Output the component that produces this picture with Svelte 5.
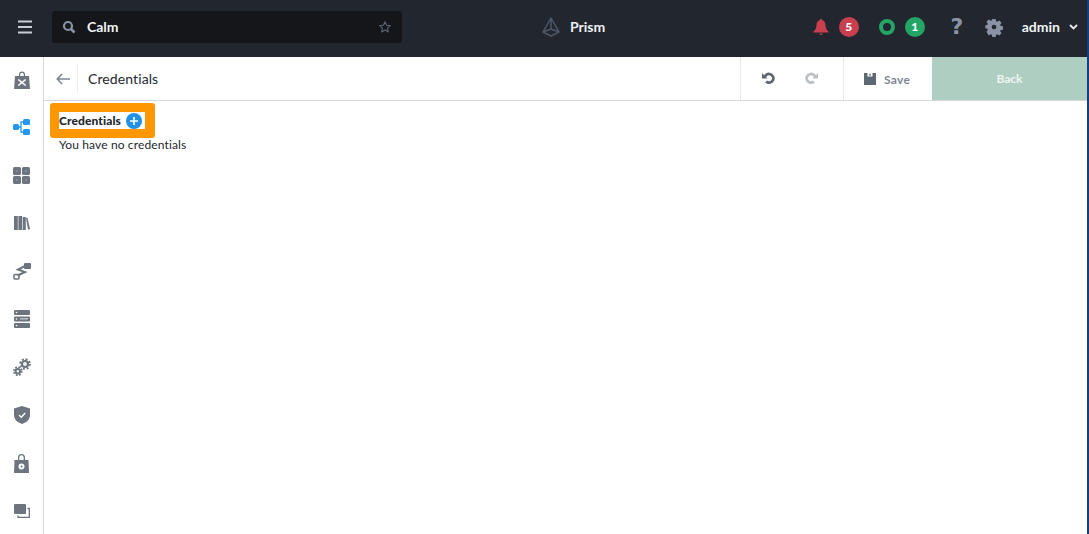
<script>
  const counts = { alerts: 5, tasks: 1 };
</script>

<div class="page">
  <header class="topbar">
    <button class="burger" aria-label="Menu">
      <svg width="16" height="14" viewBox="0 0 16 14"><path d="M1 1.500h14M1 7h14M1 12.500h14" stroke="#c9ced6" stroke-width="1.800" fill="none"/></svg>
    </button>
    <div class="search">
      <svg width="14" height="14" viewBox="0 0 14 14" class="search-icon"><circle cx="6" cy="6" r="4" fill="none" stroke="#8a93a3" stroke-width="2.200"/><path d="M9 9l3.500 3.500" stroke="#8a93a3" stroke-width="2.600"/></svg>
      <span class="search-text">Calm</span>
      <svg width="14" height="14" viewBox="0 0 24 24" class="star"><path d="M12 3l2.700 6 6.500.7-4.900 4.300 1.400 6.400L12 17.100l-5.700 3.300 1.400-6.400-4.900-4.300 6.500-.7z" fill="none" stroke="#5b6472" stroke-width="2" stroke-linejoin="round"/></svg>
    </div>
    <div class="brand">
      <svg width="18" height="20" viewBox="0 0 18 20"><path d="M9 1L1 15l8 4 8-4zM9 1v11M1 15l8-3 8 3" fill="none" stroke="#4d5767" stroke-width="1.500" stroke-linejoin="round"/></svg>
      <span>Prism</span>
    </div>
    <div class="status">
      <svg class="bell" width="16" height="18" viewBox="0 0 16 18"><path d="M8 1c-.8 0-1.200.5-1.300 1.200C4.500 2.900 3.600 4.700 3.500 7c-.1 3-.7 5-3 6.600V14.500h15v-.9c-2.300-1.600-2.900-3.600-3-6.600-.1-2.300-1-4.100-3.200-4.800C9.200 1.500 8.800 1 8 1zM6.500 15.500h3a1.500 1.500 0 0 1-3 0z" fill="#c8404f"/></svg>
      <span class="badge red">{counts.alerts}</span>
      <span class="ring"></span>
      <span class="badge green">{counts.tasks}</span>
      <span class="help">?</span>
      <svg class="gear" width="16" height="16" viewBox="0 0 24 24"><path fill="#8a93a3" fill-rule="evenodd" d="M9.500 0h5l.6 3.400 1.900.8 2.800-2 3.500 3.500-2 2.800.8 1.900 3.400.6v5l-3.400.6-.8 1.900 2 2.800-3.500 3.500-2.800-2-1.900.8-.6 3.400h-5l-.6-3.400-1.900-.8-2.800 2L.7 19.300l2-2.800-.8-1.900L-1 14V9.500l2.900-.6.8-1.900-2-2.800L4.200 .7l2.800 2 1.900-.8zM12 8.500a3.500 3.500 0 1 0 0 7 3.500 3.500 0 0 0 0-7z"/></svg>
      <span class="user">admin</span>
      <svg width="9" height="6" viewBox="0 0 9 6" class="caret"><path d="M1 1l3.500 3.500L8 1" fill="none" stroke="#e6e8ec" stroke-width="1.800"/></svg>
    </div>
  </header>

  <div class="body">
    <nav class="sidebar">
      <svg width="16" height="18" viewBox="0 0 16 18"><path fill="#6c757f" fill-rule="evenodd" d="M5 5V3.500a3 3 0 0 1 6 0V5h4l1 13H0L1 5zm1.200 0h3.600V3.500a1.800 1.800 0 0 0-3.600 0zM4.800 8l-1 1 3 2.500-3 2.500 1 1L8 12.500l3.200 2.500 1-1-3-2.500 3-2.500-1-1L8 10.500z"/></svg>
      <svg width="17" height="16" viewBox="0 0 17 16"><g fill="#2196f3"><rect x="0" y="5" width="6" height="6" rx="1.500"/><rect x="10" y="0" width="7" height="6" rx="1.500"/><rect x="10" y="10" width="7" height="6" rx="1.500"/></g><path d="M5 8h3M11 3H8v10h3" fill="none" stroke="#2196f3" stroke-width="1.300"/></svg>
      <svg width="17" height="17" viewBox="0 0 17 17"><g fill="#6c757f"><rect width="8" height="8" rx="1.500"/><rect x="9" width="8" height="8" rx="1.500"/><rect y="9" width="8" height="8" rx="1.500"/><rect x="9" y="9" width="8" height="8" rx="1.500"/></g><g fill="#a9aeb4"><circle cx="4" cy="4" r=".7"/><circle cx="13" cy="4" r=".7"/><circle cx="4" cy="13" r=".7"/><circle cx="13" cy="13" r=".7"/></g></svg>
      <svg width="16" height="14" viewBox="0 0 16 14"><g fill="#6c757f"><rect width="3.800" height="14"/><rect x="4.400" width="3.800" height="14"/><rect x="8.800" y="1" width="3" height="13"/><path d="M12 2l1.400-.5L16 13l-2 .8z"/></g></svg>
      <svg width="18" height="17" viewBox="0 0 18 17"><rect x="11" y="0" width="7" height="6" rx="1" fill="#6c757f"/><rect x="1" y="11.500" width="5" height="4.500" rx="1" fill="none" stroke="#6c757f" stroke-width="1.600"/><path d="M12 3L5 6.500l7 2.500-7.500 3.500" fill="none" stroke="#6c757f" stroke-width="2"/></svg>
      <svg width="16" height="18" viewBox="0 0 16 18"><g fill="#6c757f"><rect width="16" height="5" rx="1"/><rect y="6.500" width="16" height="5" rx="1"/><rect y="13" width="16" height="5" rx="1"/></g><g fill="#fff"><circle cx="2.500" cy="2.500" r=".8"/><circle cx="2.500" cy="9" r=".8"/><circle cx="2.500" cy="15.500" r=".8"/><rect x="6" y="8.500" width="8" height=".8"/></g></svg>
      <svg width="18" height="18" viewBox="0 0 18 18"><g fill="none" stroke="#6c757f"><circle cx="12" cy="6" r="3" stroke-width="2.200"/><circle cx="12" cy="6" r="4.900" stroke-width="1.800" stroke-dasharray="2 1.850"/><circle cx="4.800" cy="13.200" r="2.200" stroke-width="2"/><circle cx="4.800" cy="13.200" r="4" stroke-width="1.600" stroke-dasharray="1.800 1.340"/></g></svg>
      <svg width="16" height="18" viewBox="0 0 16 18"><path fill="#6c757f" d="M8 0l8 2.500V9c0 4.500-3.500 7.500-8 9-4.500-1.500-8-4.500-8-9V2.500z"/><path d="M5 9l2.300 2.200L11.200 7" fill="none" stroke="#fff" stroke-width="1.400"/></svg>
      <svg width="15" height="19" viewBox="0 0 15 19"><path fill="#6c757f" fill-rule="evenodd" d="M4 6V3.500a3.500 3.500 0 0 1 7 0V6h3.500L15 19H0L.5 6zm1.300 0h4.400V3.500a2.200 2.200 0 0 0-4.400 0zM7.500 9.500a3 3 0 1 0 0 6 3 3 0 0 0 0-6zm0 2a1 1 0 1 1 0 2 1 1 0 0 1 0-2z"/></svg>
      <svg width="16" height="14" viewBox="0 0 16 14"><path fill="#6c757f" d="M0 1a1 1 0 0 1 1-1h10a1 1 0 0 1 1 1v9H1a1 1 0 0 1-1-1z"/><path d="M13.500 4.500h1.800V13.300H4V11.500" fill="none" stroke="#6c757f" stroke-width="1.300"/></svg>
    </nav>

    <main class="main">
      <div class="toolbar">
        <button class="back-arrow" aria-label="Go back">
          <svg width="14" height="12" viewBox="0 0 14 12"><path d="M6 1L1.300 6 6 11M1.500 6H14" fill="none" stroke="#7d8795" stroke-width="1.600"/></svg>
        </button>
        <div class="title">Credentials</div>
        <div class="history">
          <svg width="13" height="13" viewBox="0 0 24 24"><path d="M5 11a8 8 0 1 1 2.500 6.500" fill="none" stroke="#5e6873" stroke-width="5"/><path d="M0 2l10 10H0z" fill="#5e6873"/></svg>
          <svg width="13" height="13" viewBox="0 0 24 24"><path d="M19 11a8 8 0 1 0-2.500 6.500" fill="none" stroke="#bcc1c6" stroke-width="5"/><path d="M24 2L14 12h10z" fill="#bcc1c6"/></svg>
        </div>
        <div class="save">
          <svg width="12" height="12" viewBox="0 0 12 12"><path fill-rule="evenodd" fill="#5e6873" d="M0 0h12v12H0zM3.500 0v3.500h5V0zM5.300 .8h1.400v2H5.300z"/></svg>
          <span>Save</span>
        </div>
        <div class="back-btn">Back</div>
      </div>

      <section class="content">
        <div class="highlight">
          <div class="heading">
            <span>Credentials</span>
            <svg width="16" height="16" viewBox="0 0 16 16"><circle cx="8" cy="8" r="8" fill="#2291e6"/><path d="M8 4v8M4 8h8" stroke="#fff" stroke-width="1.600"/></svg>
          </div>
        </div>
        <p>You have no credentials</p>
      </section>
    </main>
  </div>
</div>

<style>
  :global(body) {
    background: #143f7f;
    font-family: "Lato", "Open Sans", sans-serif;
    overflow: hidden;
  }
  .page {
    height: 534px;
    margin-right: 2px;
    background: #fff;
    display: flex;
    flex-direction: column;
  }
  button {
    background: none;
    border: 0;
    padding: 0;
    display: flex;
  }
  .topbar {
    height: 57px;
    box-sizing: border-box;
    padding-bottom: 4px;
    background: #22272f;
    display: flex;
    align-items: center;
    flex-shrink: 0;
  }
  .burger {
    margin-left: 17px;
  }
  .search {
    margin-left: 19px;
    width: 350px;
    height: 32px;
    background: #14161a;
    border-radius: 3px;
    display: flex;
    align-items: center;
    box-sizing: border-box;
    padding: 0 10px;
  }
  .search-icon {
    margin-right: 11px;
  }
  .search-text {
    color: #f2f3f5;
    font-size: 14px;
    font-weight: 700;
    flex: 1;
  }
  .brand {
    margin-left: 140px;
    display: flex;
    align-items: center;
    gap: 10px;
    color: #eef0f2;
    font-size: 14px;
    font-weight: 700;
  }
  .status {
    margin-left: auto;
    display: flex;
    align-items: center;
    padding-right: 9px;
  }
  .badge {
    width: 20px;
    height: 20px;
    border-radius: 50%;
    color: #fff;
    font-size: 12px;
    font-weight: 900;
    display: flex;
    align-items: center;
    justify-content: center;
  }
  .red {
    background: #c8404f;
    margin-left: 10px;
  }
  .green {
    background: #22a565;
    margin-left: 10px;
  }
  .ring {
    width: 16px;
    height: 16px;
    box-sizing: border-box;
    border: 4px solid #22a565;
    border-radius: 50%;
    margin-left: 20px;
  }
  .help {
    margin-left: 25px;
    color: #8a93a3;
    font-family: "DejaVu Sans", sans-serif;
    font-size: 22px;
    font-weight: 700;
    width: 14px;
    text-align: center;
  }
  .gear {
    margin-left: 22px;
    overflow: visible;
  }
  .user {
    margin-left: 20px;
    color: #f2f3f5;
    font-size: 14px;
    font-weight: 700;
  }
  .caret {
    margin-left: 9px;
  }
  .body {
    flex: 1;
    display: flex;
    min-height: 0;
  }
  .sidebar {
    width: 44px;
    box-sizing: border-box;
    flex-shrink: 0;
    border-right: 1px solid #d5d7d9;
    display: grid;
    grid-template-rows: 46px;
    grid-auto-rows: 48px;
    justify-items: center;
    align-items: center;
    overflow: hidden;
  }
  .main {
    flex: 1;
    display: flex;
    flex-direction: column;
  }
  .toolbar {
    height: 44px;
    border-bottom: 1px solid #d5d7d9;
    display: flex;
    align-items: stretch;
    box-sizing: border-box;
  }
  .back-arrow {
    align-items: center;
    padding: 0 7px 0 12px;
    margin: 7px 0;
    border-right: 1px solid #eceef0;
  }
  .title {
    flex: 1;
    display: flex;
    align-items: center;
    padding-left: 10px;
    font-size: 14px;
    letter-spacing: .1px;
    color: #22272f;
  }
  .history {
    width: 103px;
    box-sizing: border-box;
    padding-right: 4px;
    border-left: 1px solid #e6e8ea;
    display: flex;
    align-items: center;
    justify-content: center;
    gap: 30px;
  }
  .save {
    width: 89px;
    border-left: 1px solid #e6e8ea;
    display: flex;
    align-items: center;
    box-sizing: border-box;
    padding-left: 20px;
    gap: 8px;
    font-size: 12px;
    letter-spacing: .3px;
    font-weight: 700;
    color: #7d8795;
  }
  .save span {
    padding-top: 1px;
  }
  .back-btn {
    width: 155px;
    background: #aecec1;
    color: #eef5f2;
    font-size: 12px;
    font-weight: 700;
    display: flex;
    align-items: center;
    justify-content: center;
  }
  .content {
    padding: 2px 0 0 6px;
  }
  .highlight {
    width: 105px;
    height: 35px;
    box-sizing: border-box;
    background: #ff9800;
    border-radius: 3px;
    padding: 9px 0 0 9px;
    margin-bottom: -1px;
  }
  .heading {
    width: 86px;
    height: 17px;
    background: #fff;
    display: flex;
    align-items: center;
    gap: 5px;
    font-size: 12px;
    letter-spacing: .1px;
    font-weight: 900;
    color: #22272f;
    white-space: nowrap;
  }
  p {
    margin: 0;
    padding: 0 0 0 9px;
    font-size: 12px;
    letter-spacing: .13px;
    line-height: 15px;
    color: #22272f;
  }
</style>
